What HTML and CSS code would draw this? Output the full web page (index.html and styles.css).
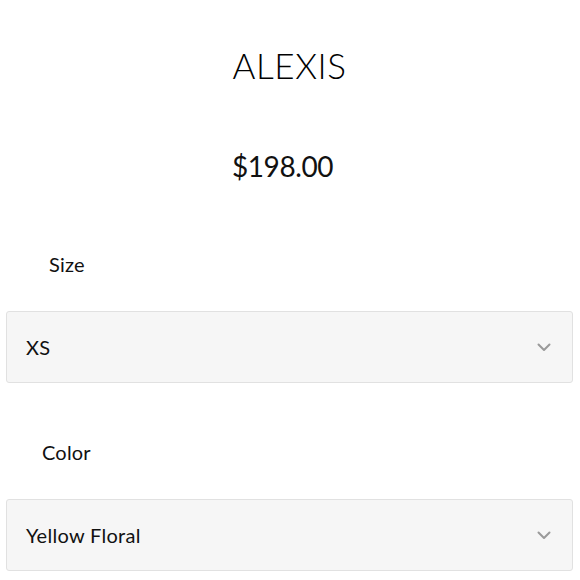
FILE: index.html
```html
<!DOCTYPE html>
<html>
<head>
<meta charset="utf-8">
<link rel="stylesheet" href="styles.css">
</head>
<body>
<div class="page">
  <h1 class="title">ALEXIS</h1>
  <div class="price">$198.00</div>
  <div class="label label-size">Size</div>
  <div class="select">
    <span class="value">XS</span>
    <svg class="chev" width="14" height="9" viewBox="0 0 14 9"><path d="M1.5 1.5 L7 7 L12.5 1.5" fill="none" stroke="#9a9a9a" stroke-width="2" stroke-linecap="round" stroke-linejoin="round"/></svg>
  </div>
  <div class="label label-color">Color</div>
  <div class="select">
    <span class="value">Yellow Floral</span>
    <svg class="chev" width="14" height="9" viewBox="0 0 14 9"><path d="M1.5 1.5 L7 7 L12.5 1.5" fill="none" stroke="#9a9a9a" stroke-width="2" stroke-linecap="round" stroke-linejoin="round"/></svg>
  </div>
</div>
</body>
</html>
```
FILE: styles.css
```css
html, body {
  margin: 0;
  padding: 0;
  background: #ffffff;
}
body {
  font-family: Lato, "Noto Sans", sans-serif;
  color: #111111;
}
.page {
  width: 580px;
  height: 580px;
  box-sizing: border-box;
  padding: 45px 7px 0 6px;
  display: flex;
  flex-direction: column;
}
.title {
  margin: 0;
  font-weight: 300;
  font-size: 35px;
  line-height: 40px;
  text-align: center;
  letter-spacing: 0.6px;
  color: #000000;
}
.price {
  margin-top: 64px;
  padding-right: 14px;
  font-weight: 400;
  font-size: 28px;
  line-height: 34px;
  text-align: center;
  letter-spacing: -0.4px;
}
.label {
  font-size: 20px;
  line-height: 24px;
  letter-spacing: 0.2px;
}
.label-size {
  margin-top: 69px;
  padding-left: 43px;
}
.label-color {
  margin-top: 57px;
  padding-left: 36px;
}
.select {
  margin-top: 35px;
  height: 72px;
  box-sizing: border-box;
  border: 1px solid #e1e1e1;
  border-radius: 3px;
  background: #f6f6f6;
  display: flex;
  align-items: center;
  justify-content: space-between;
  padding: 0 21px 0 19px;
}
.value {
  font-size: 20px;
  line-height: 24px;
  letter-spacing: 0.3px;
}
.chev {
  display: block;
}
```
